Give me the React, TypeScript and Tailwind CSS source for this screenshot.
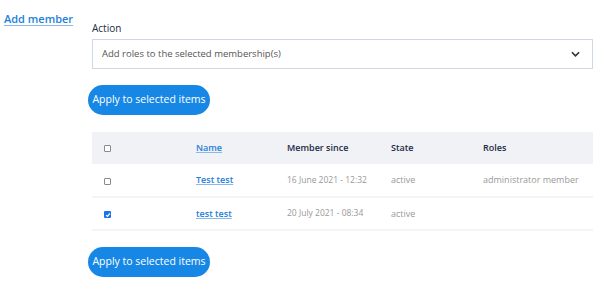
import React from 'react';

type Member = {
  id: number;
  name: string;
  since: string;
  state: string;
  roles: string;
  checked: boolean;
};

const members: Member[] = [
  { id: 1, name: 'Test test', since: '16 June 2021 - 12:32', state: 'active', roles: 'administrator member', checked: false },
  { id: 2, name: 'test test', since: '20 July 2021 - 08:34', state: 'active', roles: '', checked: true },
];

const Checkbox = ({ checked }: { checked: boolean }) =>
  checked ? (
    <span className="flex h-[7px] w-[7px] items-center justify-center rounded-[1px] bg-[#1a73e8]">
      <svg viewBox="0 0 8 8" className="h-[6px] w-[6px]" fill="none" stroke="white" strokeWidth="1.6">
        <path d="M1.5 4.2 3.2 5.8 6.5 2" />
      </svg>
    </span>
  ) : (
    <span className="block h-[7px] w-[7px] rounded-[1px] border border-[#8a8a8a] bg-white" />
  );

const ApplyButton = () => (
  <button className="-ml-1 block h-[30px] w-[122px] whitespace-nowrap rounded-full bg-[#1787e6] px-0 text-[10.5px] text-white">
    Apply to selected items
  </button>
);

export default function App() {
  return (
    <div className="flex h-[284px] w-[602px] bg-white font-['Open_Sans',sans-serif] text-[#222b45]">
      {/* Left column */}
      <div className="w-[92px] pl-1 pt-[5px]">
        <a className="text-[11px] font-semibold text-[#1f7fd9] underline decoration-[#8ab8ea] underline-offset-2">
          Add member
        </a>
      </div>

      {/* Main column */}
      <div className="w-[501px] pt-[21px]">
        <label className="block text-[10px] leading-[14px] text-[#222b45]">Action</label>
        <div className="mt-[4px] flex h-[30px] items-center justify-between border border-[#cfd6e4] pl-[9px] pr-3">
          <span className="text-[9.5px] text-[#555]">Add roles to the selected membership(s)</span>
          <svg viewBox="0 0 10 6" className="h-[6px] w-[9px]" fill="none" stroke="#333" strokeWidth="1.8">
            <path d="M1 1l4 4 4-4" />
          </svg>
        </div>

        <div className="mt-[16px]">
          <ApplyButton />
        </div>

        {/* Members table */}
        <table className="mt-[17px] w-full border-collapse text-left text-[9px]">
          <thead>
            <tr className="h-[32px] bg-[#f0f2f6]">
              <th className="w-[104px] pl-3 align-middle">
                <Checkbox checked={false} />
              </th>
              <th className="w-[91px] font-semibold">
                <a className="text-[#1f7fd9] underline decoration-[#8ab8ea]">Name</a>
              </th>
              <th className="w-[104px] font-semibold">Member since</th>
              <th className="w-[92px] font-semibold">State</th>
              <th className="font-semibold">Roles</th>
            </tr>
          </thead>
          <tbody>
            {members.map((m) => (
              <tr key={m.id} className="h-[33px] border-b-2 border-[#f2f4f7]">
                <td className="pl-3 pt-[2px]">
                  <Checkbox checked={m.checked} />
                </td>
                <td>
                  <a className="font-semibold text-[#1f7fd9] underline decoration-[#8ab8ea]">{m.name}</a>
                </td>
                <td className="text-[8.5px] text-[#999]">{m.since}</td>
                <td className="text-[#999]">{m.state}</td>
                <td className="text-[#999]">{m.roles}</td>
              </tr>
            ))}
          </tbody>
        </table>

        <div className="mt-[16px]">
          <ApplyButton />
        </div>
      </div>
    </div>
  );
}
